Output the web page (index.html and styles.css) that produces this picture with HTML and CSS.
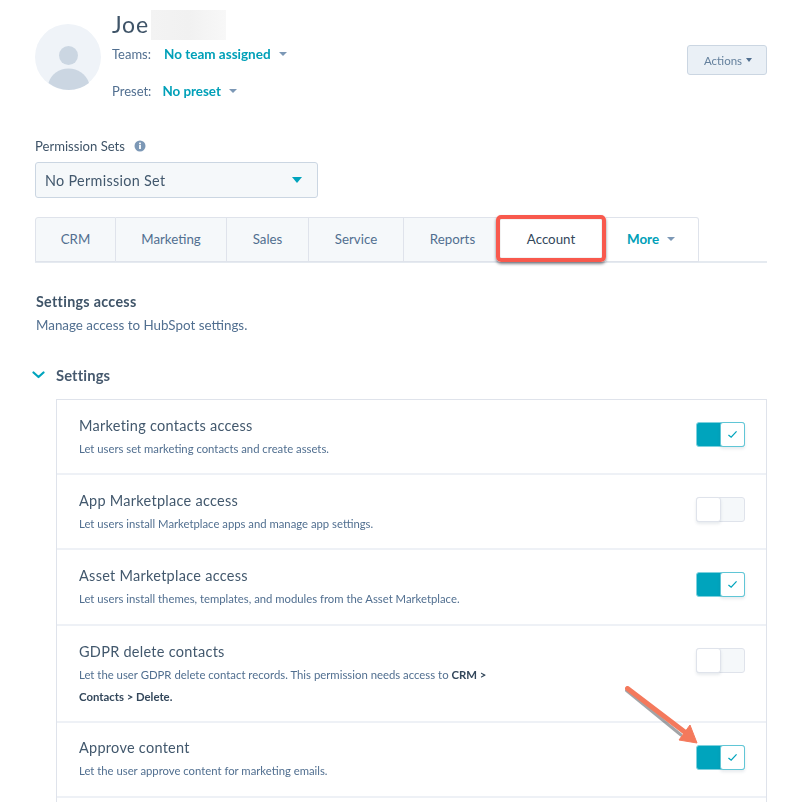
FILE: index.html
```html
<!DOCTYPE html>
<html lang="en">
<head>
<meta charset="utf-8">
<title>User permissions</title>
<link rel="stylesheet" href="styles.css">
</head>
<body>
<main class="page">
  <header class="profile">
    <div class="avatar">
      <svg viewBox="0 0 66 66" width="66" height="66" aria-hidden="true">
        <circle cx="33" cy="33" r="33" fill="#eff3f8"/>
        <circle cx="33.5" cy="31.5" r="9.5" fill="#cbd6e2"/>
        <path d="M13.5 59 C16 50 24 44.500 33.500 44.500 C43 44.500 51 50 54 59 A33 33 0 0 1 13.500 59Z" fill="#cbd6e2"/>
      </svg>
    </div>
    <div class="identity">
      <div class="name-row"><h1 class="name">Joe</h1><span class="redacted"></span></div>
      <div class="meta meta-teams"><span class="meta-label">Teams:</span><span class="link link-teams">No team assigned</span><span class="caret caret-grey"></span></div>
      <div class="meta meta-preset"><span class="meta-label">Preset:</span><span class="link">No preset</span><span class="caret caret-grey"></span></div>
    </div>
    <button class="actions">Actions<span class="caret caret-dark"></span></button>
  </header>

  <section class="permission">
    <div class="perm-label">Permission Sets
      <svg class="info" viewBox="0 0 12 12" width="12" height="12" aria-hidden="true"><circle cx="6" cy="6" r="5.500" fill="#7c98b6"/><rect x="5.100" y="5" width="1.800" height="4" fill="#fff"/><rect x="5.100" y="2.600" width="1.800" height="1.700" fill="#fff"/></svg>
    </div>
    <div class="select"><span>No Permission Set</span><span class="select-caret"></span></div>
  </section>

  <nav class="tabs">
    <span class="tab tab-crm">CRM</span>
    <span class="tab tab-marketing">Marketing</span>
    <span class="tab tab-sales">Sales</span>
    <span class="tab tab-service">Service</span>
    <span class="tab tab-reports">Reports</span>
    <span class="tab tab-account">Account</span>
    <span class="tab tab-more"><span class="link">More</span><span class="caret caret-grey"></span></span>
  </nav>

  <section class="access">
    <h2 class="access-title">Settings access</h2>
    <p class="access-desc">Manage access to HubSpot settings.</p>
  </section>

  <div class="group-head">
    <svg class="chevron" viewBox="0 0 13 8" width="13" height="8" aria-hidden="true"><path d="M1.500 1.500 6.500 6 11.500 1.500" fill="none" stroke="#00a4bd" stroke-width="2.200" stroke-linecap="round" stroke-linejoin="round"/></svg>
    <span>Settings</span>
  </div>

  <div class="list">
    <div class="row">
      <div class="row-text"><div class="row-title">Marketing contacts access</div><div class="row-desc">Let users set marketing contacts and create assets.</div></div>
      <span class="toggle on"><span class="knob"><svg viewBox="0 0 12 10" width="11" height="9" aria-hidden="true"><path d="M1.500 5.500 4.500 8 10.500 1.500" fill="none" stroke="#00a4bd" stroke-width="1.400"/></svg></span></span>
    </div>
    <div class="row">
      <div class="row-text"><div class="row-title">App Marketplace access</div><div class="row-desc">Let users install Marketplace apps and manage app settings.</div></div>
      <span class="toggle off"><span class="knob"></span></span>
    </div>
    <div class="row row-76">
      <div class="row-text"><div class="row-title">Asset Marketplace access</div><div class="row-desc">Let users install themes, templates, and modules from the Asset Marketplace.</div></div>
      <span class="toggle on"><span class="knob"><svg viewBox="0 0 12 10" width="11" height="9" aria-hidden="true"><path d="M1.500 5.500 4.500 8 10.500 1.500" fill="none" stroke="#00a4bd" stroke-width="1.400"/></svg></span></span>
    </div>
    <div class="row row-tall">
      <div class="row-text"><div class="row-title">GDPR delete contacts</div><div class="row-desc row-desc-wrap">Let the user GDPR delete contact records. This permission needs access to <b>CRM &gt; Contacts &gt; Delete.</b></div></div>
      <span class="toggle off"><span class="knob"></span></span>
    </div>
    <div class="row">
      <div class="row-text row-text-up"><div class="row-title">Approve content</div><div class="row-desc">Let the user approve content for marketing emails.</div></div>
      <span class="toggle on"><span class="knob"><svg viewBox="0 0 12 10" width="11" height="9" aria-hidden="true"><path d="M1.500 5.500 4.500 8 10.500 1.500" fill="none" stroke="#00a4bd" stroke-width="1.400"/></svg></span></span>
    </div>
    <div class="row"></div>
  </div>
</main>

<div class="callout-box"></div>
<svg class="callout-arrow" viewBox="0 0 90 70" width="90" height="70" aria-hidden="true">
  <path d="M1.500 4.500 L56 49" stroke="#55595f" stroke-opacity=".55" stroke-width="3" stroke-linecap="round"/>
  <path d="M2.500 2.500 L61 47" stroke="#f4795c" stroke-width="5" stroke-linecap="round"/>
  <path d="M72 57 L54 54 L65 39 Z" fill="#f4795c" stroke="#f4795c" stroke-width="1" stroke-linejoin="round"/>
</svg>
</body>
</html>
```
FILE: styles.css
```css
* { box-sizing: border-box; }
html, body { margin: 0; padding: 0; height: 802px; overflow: hidden; background: #fff; }
body { font-family: Lato, "Open Sans", sans-serif; color: #33475b; position: relative; }
.page { width: 800px; padding: 0 33px 0 35px; filter: blur(.35px); }

.profile { display: flex; align-items: flex-start; height: 125px; position: relative; }
.avatar { width: 66px; height: 66px; margin-top: 24px; flex: none; }
.identity { margin-left: 11px; flex: 1; }
.name-row { display: flex; align-items: center; height: 37px; margin-top: 6px; }
.name { margin: 0; font-size: 23px; font-weight: 400; letter-spacing: .8px; line-height: 37px; color: #3f5468; }
.redacted { width: 75px; height: 30px; margin-left: 2px; background: linear-gradient(90deg, #f3f3f3, #f1f1f1 50%, #f8f8f8); }
.meta { display: flex; align-items: center; font-size: 13px; height: 20px; }
.meta-teams { margin-top: 1px; }
.meta-preset { margin-top: 17px; }
.meta-label { color: #516f90; margin-right: 13px; }
.meta-preset .meta-label { margin-right: 11px; }
.link { color: #00a0b8; font-weight: 700; font-size: 13.400px; }
.link-teams { font-size: 13.500px; }
.caret { display: inline-block; width: 0; height: 0; border-left: 4px solid transparent; border-right: 4px solid transparent; border-top: 4px solid #7c98b6; margin-left: 8px; }
.caret-dark { border-left-width: 3.500px; border-right-width: 3.500px; border-top-color: #516f90; margin-left: 4px; }
.actions { margin-top: 45px; width: 80px; height: 30px; padding: 0 0 0 2px; border: 1px solid #cbd6e2; border-radius: 3px; background: #eaf0f6; color: #64809d; font: 400 11.500px Lato, sans-serif; display: flex; align-items: center; justify-content: center; }

.permission { height: 92px; }
.perm-label { display: flex; align-items: center; gap: 9px; height: 42px; font-size: 13.100px; color: #3f5468; }
.select { display: flex; align-items: center; justify-content: space-between; width: 283px; height: 36px; margin-top: -5px; padding: 0 15px 0 9px; background: #f5f8fa; border: 1px solid #cbd6e2; border-radius: 3px; font-size: 14.400px; color: #42586d; letter-spacing: .3px; }
.select-caret { width: 0; height: 0; border-left: 5.500px solid transparent; border-right: 5.500px solid transparent; border-top: 6px solid #00a4bd; }

.tabs { display: flex; height: 46px; border-bottom: 2px solid #e5eaf0; position: relative; }
.tab { display: flex; align-items: center; justify-content: center; height: 45px; padding-bottom: 2px; background: #f5f8fa; border: 1px solid #dfe3eb; border-left: 0; font-size: 13.300px; color: #516f90; }
.tab-crm { width: 81px; border-left: 1px solid #dfe3eb; border-radius: 3px 0 0 0; }
.tab-marketing { width: 111px; }
.tab-sales { width: 82px; }
.tab-service { width: 95px; }
.tab-reports { width: 94px; border-right: 0; padding-left: 3px; }
.tab-account { width: 108px; background: #fff; color: #33475b; border: 0; padding-right: 2px; }
.tab-more { width: 93px; background: #fff; border-radius: 0 3px 0 0; padding-right: 2px; }

.access { margin-top: 30px; }
.access-title { margin: 0; padding-left: 1px; font-size: 14.300px; font-weight: 700; letter-spacing: .3px; line-height: 18px; color: #3f5468; }
.access-desc { margin: 5px 0 0; padding-left: 1px; font-size: 13.400px; line-height: 18px; color: #516f90; }

.group-head { display: flex; align-items: center; gap: 11px; height: 20px; margin-top: 31px; font-size: 14.800px; font-weight: 700; letter-spacing: .1px; color: #46596e; }
.chevron { margin-left: -3px; }

.list { margin: 14px 0 0 21px; border: 1px solid #dfe3eb; border-bottom: 0; }
.row { display: flex; justify-content: space-between; height: 75px; padding: 16px 21px 0 22px; border-bottom: 2px solid #eef1f6; }
.row-76 { height: 76px; }
.row-tall { height: 97px; }
.row-text { width: 420px; }
.row-text-up { margin-top: -1px; }
.row-title { font-size: 14.500px; line-height: 20px; color: #42586d; letter-spacing: .27px; white-space: nowrap; }
.row-desc { margin-top: 5px; font-size: 11.300px; line-height: 16px; color: #516f90; white-space: nowrap; }
.row-desc-wrap { white-space: normal; line-height: 22px; margin-top: 2px; font-size: 11.350px; }
.row-desc b { color: #33475b; }

.toggle { display: block; width: 49px; height: 25px; margin-top: 6px; border-radius: 3px; position: relative; }
.toggle.on { background: #00a4bd; border: 1px solid #7fd1de; }
.toggle.off { background: #f5f8fa; border: 1px solid #dfe3eb; }
.knob { position: absolute; top: -1px; width: 25px; height: 25px; background: #fff; border-radius: 3px; display: flex; align-items: center; justify-content: center; box-shadow: 0 2px 3px rgba(66,91,118,.12); }
.on .knob { right: -1px; border: 1px solid #60c6d6; }
.off .knob { left: -1px; border: 1px solid #dfe3eb; }

.callout-box { position: absolute; left: 496px; top: 215px; width: 110px; height: 47px; border: 4px solid #f8594d; border-radius: 5px; box-shadow: 0 2px 3px rgba(50,50,60,.6), inset 0 0 1px rgba(50,50,60,.6); }
.callout-arrow { position: absolute; left: 625px; top: 686px; overflow: visible; }
```
